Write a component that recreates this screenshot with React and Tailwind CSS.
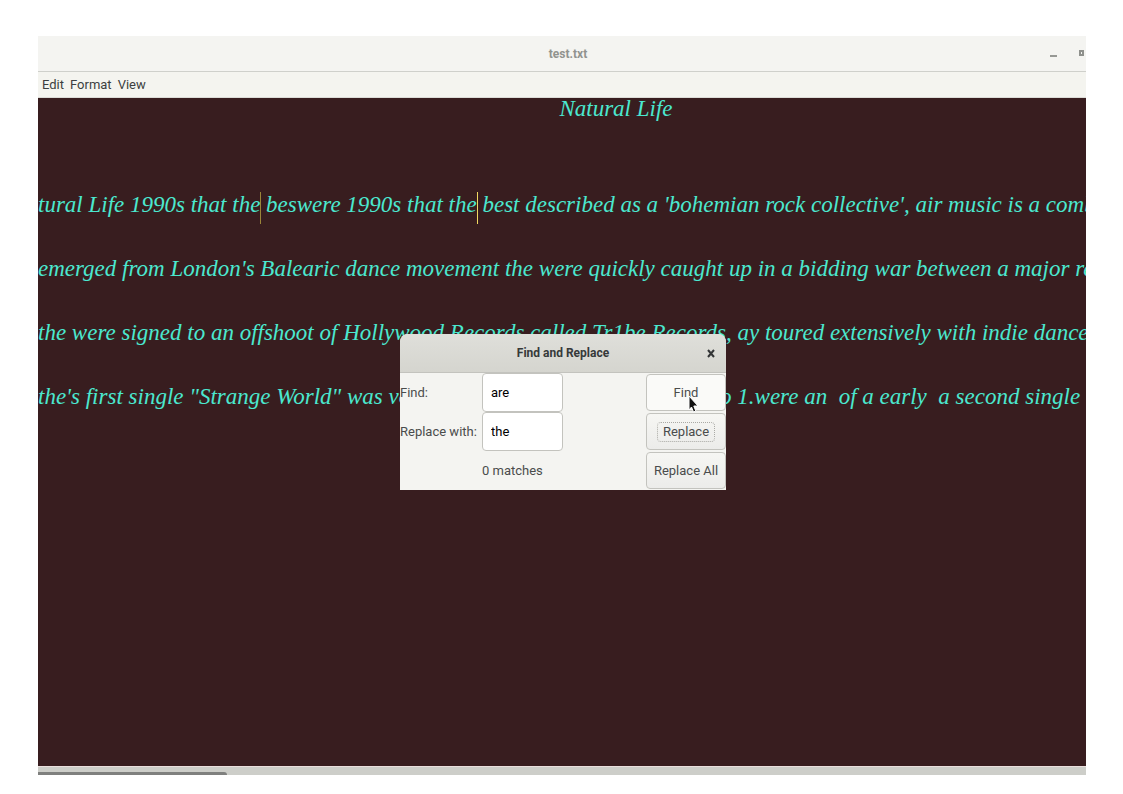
const editorLines = [
  ["tural Life 1990s that the", " beswere 1990s that the", " best described as a 'bohemian rock collective', air music is a combination"],
  ["emerged from London's Balearic dance movement the were quickly caught up in a bidding war between a major record"],
  ["the were signed to an offshoot of Hollywood Records called Tr1be Records, ay toured extensively with indie dance acts"],
  ["the's first single \"Strange World\" was voted one of the best singles on radio 1.were an  of a early  a second single \"Drum"],
];

function TitleBar() {
  return (
    <header className="flex h-9 shrink-0 items-center border-b border-[#cfd0cb] bg-[#f4f4f1]">
      <div className="w-12" />
      <h1 className="flex-1 text-center text-xs font-bold text-[#91938f]">test.txt</h1>
      <button type="button" aria-label="Minimize" className="mr-[22px]">
        <svg width="7" height="8" viewBox="0 0 7 8"><path d="M0 5h7v2H0z" fill="#969894" /></svg>
      </button>
      <button type="button" aria-label="Maximize" className="mr-0.5 pb-0.5">
        <svg width="5" height="6" viewBox="0 0 5 6"><path fillRule="evenodd" d="M0 0h5v6H0zM2 2v2h1V2z" fill="#8f918d" /></svg>
      </button>
    </header>
  );
}

function MenuBar() {
  return (
    <nav className="flex h-[26px] shrink-0 items-center gap-1.5 border-b border-[#dcdcd7] bg-[#f4f4ef] pt-px pl-1 text-[13px] text-[#3c3f40]">
      <button type="button">Edit</button>
      <button type="button">Format</button>
      <button type="button">View</button>
    </nav>
  );
}

function Caret({ dim }) {
  return (
    <span className="relative">
      <span className={dim ? "absolute top-0 left-0 h-8 w-px bg-[#9b8538]" : "absolute top-0 left-0 h-8 w-px bg-[#f0d860]"} />
    </span>
  );
}

function Editor() {
  return (
    <main className="min-h-0 flex-1 overflow-hidden bg-[#381d1f] font-['Liberation_Serif',serif] text-[23px] leading-8 text-[#4be8cf] italic">
      <div role="textbox" aria-multiline="true" aria-label="Document" className="-mt-[5px] flex flex-col gap-8 whitespace-pre">
        <p className="mb-8 pl-[108px] text-center">Natural Life</p>
        {editorLines.map((parts, row) => (
          <p key={row}>
            {parts.map((part, i) => (
              <span key={i}>
                {part}
                {i < parts.length - 1 && <Caret dim={i === 0} />}
              </span>
            ))}
          </p>
        ))}
      </div>
    </main>
  );
}

const buttonBase = "flex h-[37px] items-center justify-center rounded border border-[#c3c3be] text-[#4a4c4c]";
const inputBase = "h-[39px] w-[81px] rounded border border-[#c3c3be] bg-white px-2 text-black outline-none";

function FindDialog() {
  return (
    <section role="dialog" aria-labelledby="dialog-title" className="absolute top-[298px] left-1/2 ml-px w-[326px] -translate-x-1/2 overflow-hidden rounded-t-lg bg-[#f4f4f1] text-[13px] whitespace-nowrap text-[#4a4c4c]">
      <header className="relative flex h-[39px] items-center justify-center border-b border-[#c3c3be] bg-linear-to-b from-[#dfdfda] to-[#d5d5cf]">
        <h2 id="dialog-title" className="text-xs font-bold text-[#36393a]">Find and Replace</h2>
        <button type="button" aria-label="Close" className="absolute right-[11px]">
          <svg width="8" height="9" viewBox="0 0 8 9"><path d="M1 1l6 7M7 1L1 8" stroke="#333536" strokeWidth="2" fill="none" /></svg>
        </button>
      </header>
      <form className="grid auto-rows-[39px] grid-cols-[82px_1fr_80px] items-center" onSubmit={(e) => e.preventDefault()}>
        <label htmlFor="find">Find:</label>
        <input id="find" defaultValue="are" className={inputBase} />
        <button type="button" className={`${buttonBase} bg-[#fafaf8]`}>Find</button>
        <label htmlFor="replace">Replace with:</label>
        <input id="replace" defaultValue="the" className={inputBase} />
        <button type="button" className={`${buttonBase} bg-linear-to-b from-[#f6f6f3] to-[#ececea]`}>
          <span className="flex h-5 w-[58px] items-center justify-center rounded-sm border border-dotted border-[#aaaaa5]">Replace</span>
        </button>
        <output className="col-start-2" htmlFor="find replace">0 matches</output>
        <button type="button" className={`${buttonBase} bg-linear-to-b from-[#f6f6f3] to-[#ececea]`}>Replace All</button>
      </form>
    </section>
  );
}

function Pointer() {
  return (
    <svg className="pointer-events-none absolute top-[359px] left-[650px]" width="11" height="19" viewBox="0 0 11 19">
      <path d="M1 1v14l2.500-3 2 5 2.300-1-2-5H10z" fill="#111" stroke="#fff" strokeWidth="1" />
    </svg>
  );
}

export default function App() {
  return (
    <div className="flex min-h-screen flex-col bg-white pt-9 pr-[37px] pb-[19px] pl-[38px] font-['Roboto',sans-serif]">
      <div className="relative flex flex-1 flex-col overflow-hidden">
        <TitleBar />
        <MenuBar />
        <Editor />
        <div className="flex h-[9px] shrink-0 items-end border-t border-[#eadfdd] bg-[#cdcec9]">
          <div className="h-[3px] w-[18%] rounded-tr-sm bg-[#7f807e]" />
        </div>
        <FindDialog />
        <Pointer />
      </div>
    </div>
  );
}
